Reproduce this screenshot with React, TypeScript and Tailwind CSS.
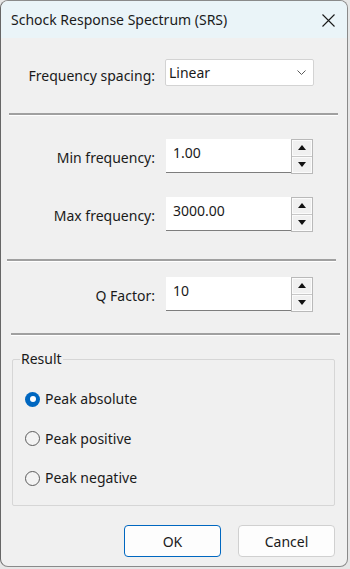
import React from "react";

function Spin() {
  return (
    <div className="w-[22px] h-[35px] border border-[#b9b9b9] bg-[#f0f0f0] flex flex-col">
      <div className="h-[16px] border border-[#fbfbfb] flex items-center justify-center">
        <svg width="8" height="5" viewBox="0 0 8 5"><polygon points="0,5 8,5 4,0" fill="#111" /></svg>
      </div>
      <div className="h-[1px] bg-[#c8c8c8]" />
      <div className="flex-1 border border-[#fbfbfb] flex items-center justify-center">
        <svg width="8" height="5" viewBox="0 0 8 5"><polygon points="0,0 8,0 4,5" fill="#111" /></svg>
      </div>
    </div>
  );
}

function SpinRow({ label, value, mt }: { label: string; value: string; mt: string }) {
  return (
    <div className={`flex items-center h-[34px] ${mt}`}>
      <div className="w-[154px] text-right text-[14px] text-[#1a1a1a] leading-[20px] mt-[3px]">{label}</div>
      <div className="ml-[11px] flex items-start">
        <div className="w-[125px] h-[34px] bg-white border-b border-b-[#7d7d7d] pl-[7px] pt-[4px] text-[14px] leading-[20px] text-[#1a1a1a]">
          {value}
        </div>
        <Spin />
      </div>
    </div>
  );
}

function Radio({ label, checked }: { label: string; checked?: boolean }) {
  return (
    <div className="flex items-center h-[20px]">
      {checked ? (
        <div className="w-[15px] h-[15px] rounded-full bg-[#0067c0] flex items-center justify-center">
          <div className="w-[6px] h-[6px] rounded-full bg-white" />
        </div>
      ) : (
        <div className="w-[15px] h-[15px] rounded-full border border-[#5c5c5c] bg-[#f3f3f3]" />
      )}
      <span className="ml-[5px] text-[14px] leading-[20px] text-[#1a1a1a]">{label}</span>
    </div>
  );
}

export default function App() {
  return (
    <div className="w-[350px] h-[569px] bg-[#e6e6e6] overflow-hidden font-['Noto_Sans',sans-serif]">
      <div className="w-[348px] h-[567px] bg-[#f0f0f0] border border-[#8a8a8a] border-l-[#666666] rounded-[8px] overflow-hidden flex flex-col">
        <div className="h-[37px] shrink-0 bg-[#eaf4f8] flex items-center justify-between pl-[10px] pr-[12px]">
          <span className="text-[14px] text-[#1b1b1b] leading-[20px]">Schock Response Spectrum (SRS)</span>
          <svg width="13" height="13" viewBox="0 0 13 13" className="mt-[1px]">
            <path d="M0.5 0.5 L12.5 12.5 M12.5 0.5 L0.5 12.5" stroke="#1a1a1a" strokeWidth="1.1" />
          </svg>
        </div>

        <div className="flex items-center h-[27px] mt-[21px]">
          <div className="w-[154px] text-right text-[14px] text-[#1a1a1a] leading-[20px] mt-[6px]">Frequency spacing:</div>
          <div className="ml-[10px] w-[149px] h-[27px] bg-white border border-[#d3d3d3] rounded-[2px] flex items-center justify-between pl-[3px] pr-[7px]">
            <span className="text-[14px] leading-[20px] text-[#1a1a1a]">Linear</span>
            <svg width="9" height="5" viewBox="0 0 9 5">
              <path d="M0.5 0.5 L4.5 4.5 L8.5 0.5" stroke="#5a5a5a" strokeWidth="1" fill="none" />
            </svg>
          </div>
        </div>

        <div className="ml-[8px] w-[329px] h-[3px] mt-[27px] border-t-2 border-t-[#a0a0a0] border-b border-b-white" />

        <SpinRow label="Min frequency:" value="1.00" mt="mt-[23px]" />
        <SpinRow label="Max frequency:" value="3000.00" mt="mt-[24px]" />

        <div className="ml-[6px] w-[329px] h-[3px] mt-[28px] border-t-2 border-t-[#a0a0a0] border-b border-b-white" />

        <SpinRow label="Q Factor:" value="10" mt="mt-[15px]" />

        <div className="ml-[10px] w-[329px] h-[3px] mt-[22px] border-t-2 border-t-[#a0a0a0] border-b border-b-white" />

        <div className="relative ml-[11px] mt-[23px] w-[323px] h-[147px] border border-[#d6d6d6] rounded-[2px]">
          <span className="absolute left-[7px] top-[-11px] px-[1px] bg-[#f0f0f0] text-[14px] leading-[20px] text-[#1a1a1a]">Result</span>
          <div className="flex flex-col pl-[12px] pt-[29px] gap-[19.5px]">
            <Radio label="Peak absolute" checked />
            <Radio label="Peak positive" />
            <Radio label="Peak negative" />
          </div>
        </div>

        <div className="flex justify-end gap-[17px] pr-[12px] mt-[19px]">
          <button className="w-[97px] h-[32px] bg-[#fdfdfd] border border-[#0067c0] rounded-[4px] text-[14px] text-[#1a1a1a]">OK</button>
          <button className="w-[97px] h-[32px] bg-[#fdfdfd] border border-[#d0d0d0] rounded-[4px] text-[14px] text-[#1a1a1a]">Cancel</button>
        </div>
      </div>
    </div>
  );
}
